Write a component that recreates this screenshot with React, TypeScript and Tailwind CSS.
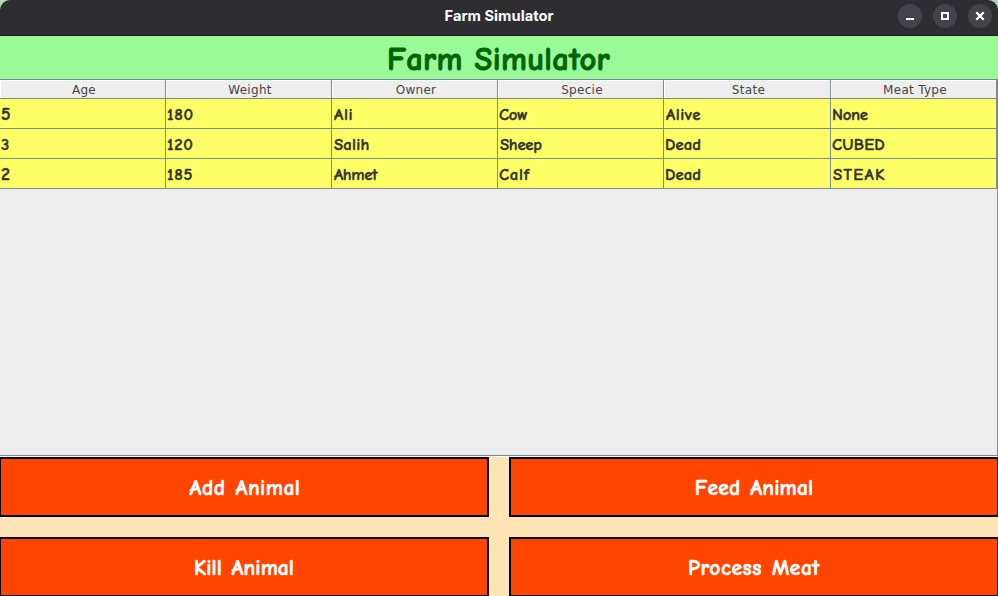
import React from "react";

const hand = "font-['Comic_Neue','Comic_Sans_MS','Lato',sans-serif] font-bold whitespace-pre";

const columns = ["Age", "Weight", "Owner", "Specie", "State", "Meat Type"];

type Cell = { text: string; style?: string };

const rows: Cell[][] = [
  [
    { text: "5", style: "text-[18px]" },
    { text: "180", style: "tracking-[0.6px]" },
    { text: "Ali", style: "tracking-[0.7px] pl-px" },
    { text: "Cow", style: "tracking-[-0.3px]" },
    { text: "Alive", style: "tracking-[0.5px] pl-px" },
    { text: "None", style: "tracking-[-0.3px]" },
  ],
  [
    { text: "3" },
    { text: "120", style: "tracking-[0.6px]" },
    { text: "Salih", style: "tracking-[0.2px] pl-px" },
    { text: "Sheep", style: "tracking-[-0.3px] pl-px" },
    { text: "Dead", style: "tracking-[0px]" },
    { text: "CUBED", style: "tracking-[0.2px]" },
  ],
  [
    { text: "2", style: "text-[18px]" },
    { text: "185", style: "tracking-[0.6px]" },
    { text: "Ahmet", style: "tracking-[-0.4px] pl-px" },
    { text: "Calf", style: "tracking-[0.7px]" },
    { text: "Dead", style: "tracking-[0px]" },
    { text: "STEAK", style: "tracking-[1.2px] pl-px" },
  ],
];

const grid = "grid grid-cols-[166px_166px_166px_166px_167px_166px]";

function WindowButton({ label, children }: { label: string; children: React.ReactNode }) {
  return (
    <button aria-label={label} className="flex size-6 items-center justify-center rounded-full bg-[#444349]">
      <svg width="24" height="24" viewBox="0 0 24 24" fill="none" stroke="white" strokeWidth="2">
        {children}
      </svg>
    </button>
  );
}

function ActionButton({ label, style }: { label: string; style: string }) {
  return (
    <button className={`flex h-[60px] items-center justify-center border-2 border-black bg-[#ff4500] text-[21.5px] leading-none text-white [-webkit-text-stroke:0.6px_white] ${hand}`}>
      <span className={`pt-[4px] [word-spacing:2px] ${style}`}>{label}</span>
    </button>
  );
}

export default function App() {
  return (
    <div className="flex h-[596px] w-[998px] flex-col overflow-hidden bg-[#eeeeee]">
      <div className="h-9 shrink-0 bg-[#b5d5b8]">
        <header className="grid h-9 grid-cols-[1fr_auto_1fr] items-center rounded-t-[10px] border-b border-[#1d1d20] bg-[#2e2d32]">
          <span />
          <h1 className="-mt-[3px] font-['Inter',sans-serif] text-[14.67px] font-bold leading-none tracking-[0.03px] text-white">
            Farm Simulator
          </h1>
          <div className="-mt-[3px] flex justify-end gap-[11px] pr-[6px]">
            <WindowButton label="Minimize"><path d="M8 15h8" /></WindowButton>
            <WindowButton label="Maximize"><path d="M9 9h6v6h-6z" /></WindowButton>
            <WindowButton label="Close"><path d="M8.3 8.3l7.4 7.4M15.7 8.3l-7.4 7.4" strokeWidth="2.3" /></WindowButton>
          </div>
        </header>
      </div>

      <div className={`flex h-[43px] shrink-0 items-center justify-center bg-[#98fb98] text-[32.5px] leading-none text-[#006400] [-webkit-text-stroke:0.9px_#006400] ${hand}`}>
        <h2 className="pr-px pt-[6px] tracking-[0.35px]">Farm Simulator</h2>
      </div>

      <main className="flex h-[377px] shrink-0 flex-col border-y border-r border-[#7a8a99]">
        <div className={`${grid} h-[19px]`}>
          {columns.map((c) => (
            <div
              key={c}
              className="h-[19px] border-b border-r border-[#7a8a99] pl-[3px] pt-[2px] text-center font-['DejaVu_Sans',sans-serif] text-[12px] leading-[16px] tracking-[0.3px] text-[#444444] shadow-[inset_1px_1px_0_white]"
            >
              {c}
            </div>
          ))}
        </div>
        {rows.map((r, i) => (
          <div key={i} className={`${grid} h-[30px]`}>
            {r.map((cell, j) => (
              <div
                key={j}
                className={`flex items-center border-b border-r border-[#7a8a99] bg-[#ffff66] pl-px pt-[3px] text-[16.8px] leading-none text-[#333333] [-webkit-text-stroke:0.4px_#333333] ${hand}`}
              >
                <span className={cell.style}>{cell.text}</span>
              </div>
            ))}
          </div>
        ))}
      </main>
      <div className="h-px shrink-0 bg-white" />

      <footer className="-mx-px grid shrink-0 grid-cols-2 gap-5 bg-[#ffe4b5]">
        <ActionButton label="Add Animal" style="tracking-[0.5px] pl-[2px]" />
        <ActionButton label="Feed Animal" style="tracking-[0.2px]" />
        <ActionButton label="Kill Animal" style="tracking-[0.1px]" />
        <ActionButton label="Process Meat" style="tracking-[0.5px]" />
      </footer>
    </div>
  );
}
